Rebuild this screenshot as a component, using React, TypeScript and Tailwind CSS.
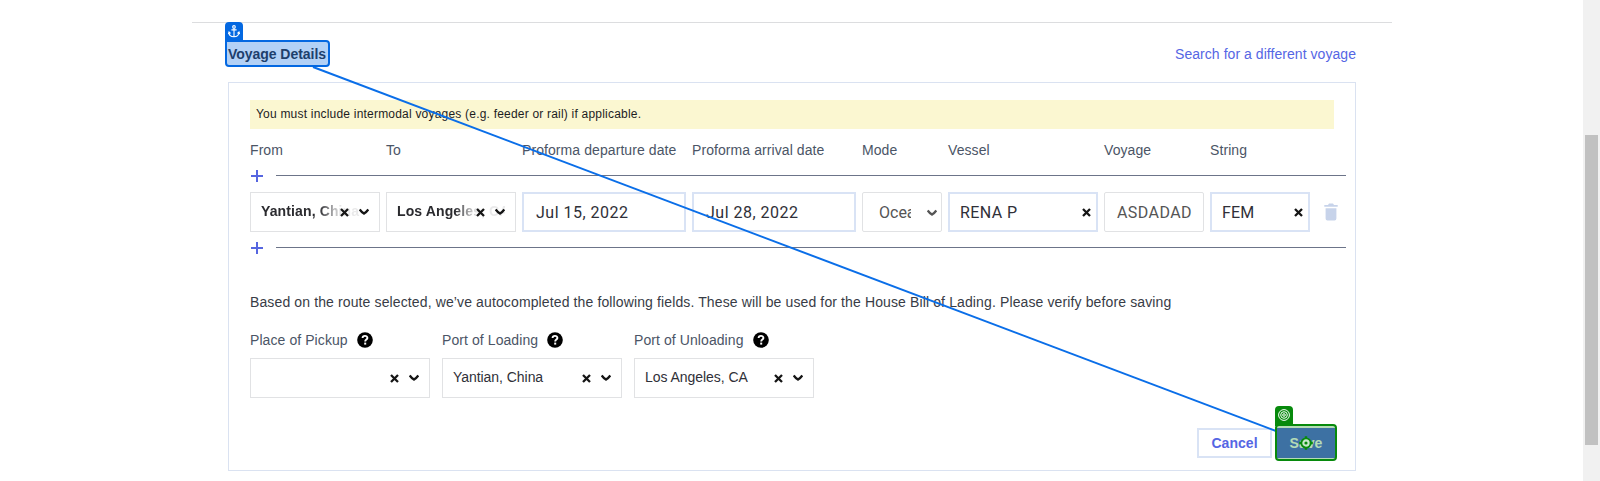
import React from "react";

const inputCols = "grid grid-cols-[130px_130px_164px_164px_80px_150px_100px_100px_auto] gap-x-[6px]";

function Cross() {
  return (
    <svg width="9" height="9" viewBox="0 0 9 9" className="shrink-0">
      <path d="M1 1 L8 8 M8 1 L1 8" stroke="#151515" strokeWidth="2.3" />
    </svg>
  );
}

function Chevron({ color = "#151515" }: { color?: string }) {
  return (
    <svg width="10" height="8" viewBox="0 0 10 8" className="shrink-0">
      <path d="M0.7 1.4 C2 3.2 3.4 4.6 5 5.6 C6.6 4.6 8 3.2 9.3 1.4" stroke={color} strokeWidth="2.3" fill="none" />
    </svg>
  );
}

function Help() {
  return (
    <svg width="16" height="16" viewBox="0 0 16 16" className="shrink-0">
      <circle cx="8" cy="8" r="7.8" fill="#000" />
      <path d="M5.6 6.1 C5.6 3.1 10.4 3.1 10.4 6 C10.4 7.6 8.2 7.6 8.2 9.5" stroke="#fff" strokeWidth="1.9" fill="none" />
      <rect x="7.2" y="10.6" width="2" height="2" fill="#fff" />
    </svg>
  );
}

function AddLeg() {
  return (
    <div className="flex h-[14px] items-start">
      <svg width="14" height="14" viewBox="0 0 14 14" className="shrink-0">
        <path d="M7 1 V13 M1 7 H13" stroke="#5666e0" strokeWidth="2" />
      </svg>
      <div className="mt-[6px] ml-[12px] h-px w-[1070px] bg-[#6c7489]" />
    </div>
  );
}

function FadedSelect({ label }: { label: string }) {
  return (
    <div className="flex h-10 items-center border border-[#e1e2e4] pr-[10px]">
      <div className="w-0 overflow-visible">
        <div className="w-[118px] pb-[1px] pl-[10px] font-['Liberation_Sans',sans-serif] text-[14px] font-bold tracking-[0.12px] whitespace-nowrap text-[#2b2b2f] [mask-image:linear-gradient(to_right,#000_68px,rgba(0,0,0,0.4)_82px,rgba(0,0,0,0.1)_90px)]">
          {label}
        </div>
      </div>
      <div className="ml-auto flex items-center gap-[10px]">
        <Cross />
        <Chevron />
      </div>
    </div>
  );
}

function PortField({ label, value }: { label: string; value: string }) {
  return (
    <div className="w-[180px]">
      <div className="flex h-4 items-center gap-[9px] text-[14px] tracking-[0.08px] whitespace-nowrap text-[#4b5566]">
        <span>{label}</span>
        <Help />
      </div>
      <div className="mt-[10px] flex h-10 items-center border border-[#e1e2e4] pr-[10px] pl-[10px]">
        <span className="pb-[1px] text-[14px] tracking-[-0.05px] text-[#2f3038]">{value}</span>
        <div className="ml-auto flex items-center gap-[10px]">
          <Cross />
          <Chevron />
        </div>
      </div>
    </div>
  );
}

export default function App() {
  return (
    <div className="relative flex h-[481px] w-[1600px] overflow-hidden bg-white font-['Liberation_Sans',sans-serif]">
      <main className="flex-1 pt-[22px] pl-[192px]">
        <div className="h-px w-[1200px] bg-[#dcdddf]" />
        <div className="ml-[36px] flex h-[59px] w-[1128px] items-center justify-between pt-[3px]">
          <h2 className="text-[14px] font-bold tracking-[-0.04px] text-[#2b2f3a]">Voyage Details</h2>
          <a className="text-[14px] tracking-[0.05px] text-[#5566e4]">Search for a different voyage</a>
        </div>

        <section className="ml-[36px] h-[389px] w-[1128px] border border-[#dae2f1] pt-[17px] pl-[21px]">
          <div className="flex h-[29px] w-[1084px] items-center bg-[#fbf7d1] pb-px pl-[6px] text-[12px] tracking-[0.205px] text-[#1d1d1f]">
            You must include intermodal voyages (e.g. feeder or rail) if applicable.
          </div>

          <div className={`${inputCols} mt-[11px] h-5 items-center text-[14px] tracking-[0.08px] whitespace-nowrap text-[#4b5566]`}>
            <span>From</span>
            <span>To</span>
            <span>Proforma departure date</span>
            <span>Proforma arrival date</span>
            <span>Mode</span>
            <span>Vessel</span>
            <span>Voyage</span>
            <span>String</span>
          </div>

          <div className="mt-[9px]">
            <AddLeg />
          </div>

          <div className={`${inputCols} mt-[9px] h-10 font-['Roboto','Liberation_Sans',sans-serif] text-[16px] text-[#2f3038]`}>
            <FadedSelect label="Yantian, China" />
            <FadedSelect label="Los Angeles, CA" />
            <div className="flex h-10 items-center border-2 border-[#d9e3f5] pt-px pl-[12px] tracking-[0.5px]">Jul 15, 2022</div>
            <div className="flex h-10 items-center border-2 border-[#d9e3f5] pt-px pl-[12px] tracking-[0.5px]">Jul 28, 2022</div>
            <div className="flex h-10 items-center rounded-[2px] border border-[#e1e2e4] pt-px pr-[4px] pl-[16px] text-[#555]">
              <span className="w-[32px] overflow-hidden whitespace-nowrap">Ocean</span>
              <span className="ml-auto">
                <Chevron color="#555" />
              </span>
            </div>
            <div className="flex h-10 items-center justify-between border-2 border-[#d9e3f5] pt-px pr-[5px] pl-[10px] tracking-[0.4px]">
              <span>RENA P</span>
              <Cross />
            </div>
            <div className="flex h-10 items-center rounded-[2px] border border-[#e1e2e4] pt-px pl-[12px] tracking-[0.42px] text-[#555]">ASDADAD</div>
            <div className="flex h-10 items-center justify-between border-2 border-[#d9e3f5] pt-px pr-[5px] pl-[10px] tracking-[0.1px]">
              <span>FEM</span>
              <Cross />
            </div>
            <div className="flex h-10 items-center pl-[8px]">
              <svg width="14" height="18" viewBox="0 0 14 18">
                <path d="M0.3 2 H4 L5 0.6 H9 L10 2 H13.7 V3.8 H0.3 Z M1.6 5.3 H12.4 V15.4 Q12.4 17.4 10.6 17.4 H3.4 Q1.6 17.4 1.6 15.4 Z" fill="#c7d3ea" />
              </svg>
            </div>
          </div>

          <div className="mt-[9px]">
            <AddLeg />
          </div>

          <p className="mt-[37px] h-5 text-[14px] leading-5 tracking-[0.123px] whitespace-nowrap text-[#383c46]">
            Based on the route selected, we’ve autocompleted the following fields. These will be used for the House Bill of Lading. Please verify before saving
          </p>

          <div className="mt-[20px] flex gap-[12px]">
            <PortField label="Place of Pickup" value="" />
            <PortField label="Port of Loading" value="Yantian, China" />
            <PortField label="Port of Unloading" value="Los Angeles, CA" />
          </div>

          <div className="mt-[30px] mr-[20px] flex justify-end gap-[5px] text-[14px] font-bold tracking-[0.05px]">
            <button className="h-[30px] w-[75px] border-2 border-[#d9e3f5] text-[#5566e4]">Cancel</button>
            <button className="h-[30px] w-[58px] bg-[#5566e4] text-white">Save</button>
          </div>
        </section>
      </main>

      <aside className="w-[17px] bg-[#f1f1f1] pt-[135px] pl-[2px]">
        <div className="h-[310px] w-[13px] bg-[#c1c1c1]" />
      </aside>

      <svg className="absolute top-0 left-0" width="1600" height="481" viewBox="0 0 1600 481">
        <path d="M313 67 L1276 431" stroke="#0a6ee8" strokeWidth="2" />
      </svg>

      <div className="absolute top-[22px] left-[225px] flex h-[20px] w-[18px] justify-center rounded-t-[4px] bg-[#0468e1] pt-[3px]">
        <svg width="12" height="13" viewBox="0 0 12 13" fill="none" stroke="#fff" strokeWidth="1.1">
          <circle cx="6" cy="1.9" r="1.3" />
          <path d="M6 3.2 V12 M3.4 4.9 H8.6 M1 7.2 C1 10.2 3 11.8 6 11.8 C9 11.8 11 10.2 11 7.2 M0.4 9 L1 7 L2.6 8.4 M11.6 9 L11 7 L9.4 8.4" />
        </svg>
      </div>
      <div className="absolute top-[40px] left-[225px] h-[27px] w-[105px] rounded-[4px] rounded-tl-none border-2 border-[#0468e1] bg-[#0468e1]/30" />

      <div className="absolute top-[406px] left-[1275px] flex h-[20px] w-[18px] justify-center rounded-t-[4px] bg-[#078a0c] pt-[3px]">
        <svg width="12" height="12" viewBox="0 0 12 12" fill="none" stroke="#fff" strokeWidth="1">
          <circle cx="6" cy="6" r="5.4" />
          <circle cx="6" cy="6" r="3.3" />
          <circle cx="6" cy="6" r="1.3" />
        </svg>
      </div>
      <div className="absolute top-[424px] left-[1275px] flex h-[37px] w-[62px] items-center justify-center rounded-[4px] border-2 border-[#078a0c] bg-[#078a0c]/30">
        <svg width="14" height="14" viewBox="0 0 14 14" fill="none">
          <path d="M7 0.2 V3 M7 11 V13.8 M0.2 7 H3 M11 7 H13.8" stroke="#078a0c" strokeWidth="2.4" />
          <circle cx="7" cy="7" r="4.6" stroke="#078a0c" strokeWidth="1.8" fill="#c9e8cc" />
          <circle cx="7" cy="7" r="1.6" fill="#078a0c" />
        </svg>
      </div>
    </div>
  );
}
